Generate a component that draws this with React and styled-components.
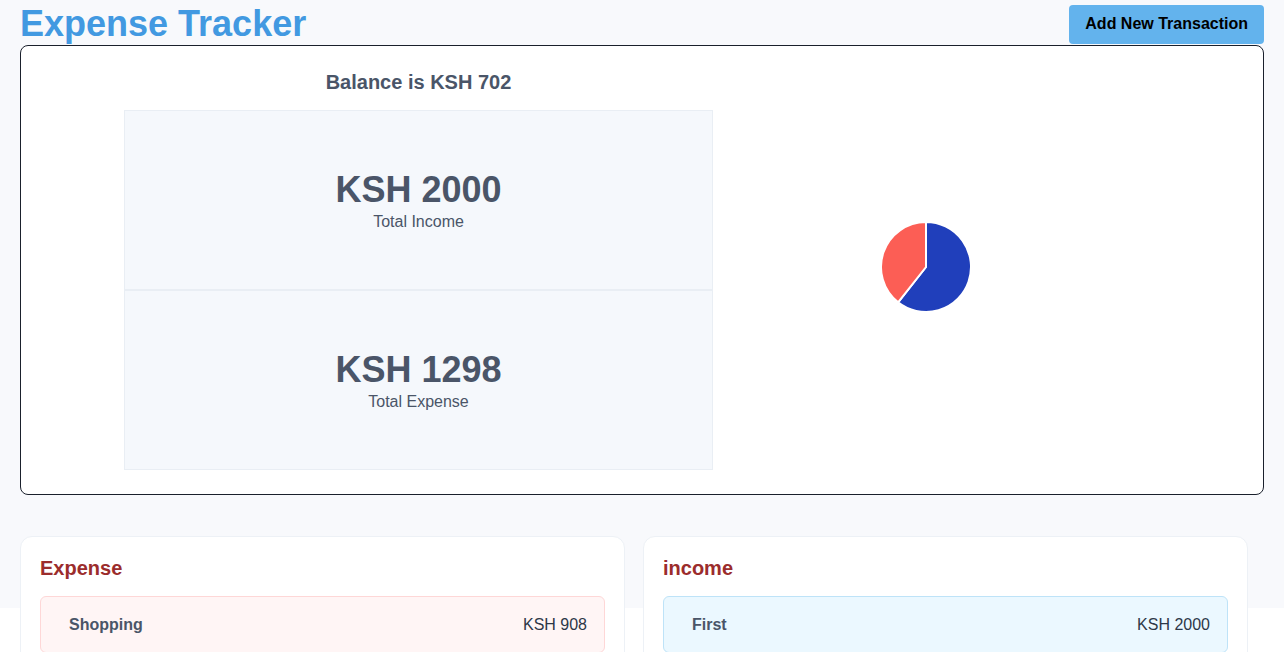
import styled, { createGlobalStyle } from "styled-components";

const GlobalStyle = createGlobalStyle`
  body {
    margin: 0;
    background: #ffffff;
    font-family: "Liberation Sans", Arial, sans-serif;
  }
  * {
    box-sizing: border-box;
  }
`;

// grey band stops at 608px, the lists run past it onto white
const Page = styled.div`
  background: linear-gradient(#f8f9fc 608px, #ffffff 608px);
  padding: 0 20px 40px;
`;

const Header = styled.header`
  display: flex;
  justify-content: space-between;
  align-items: center;
  padding: 4px 0 1px;
`;

const Title = styled.h1`
  margin: 0;
  font-size: 36px;
  line-height: 40px;
  font-weight: 700;
  color: #4299e1;
`;

const AddButton = styled.button`
  border: none;
  border-radius: 4px;
  background: #63b3ed;
  color: #000;
  font-family: inherit;
  font-size: 16px;
  font-weight: 700;
  line-height: 22px;
  padding: 8px 16px 9px;
  cursor: pointer;
`;

const SummaryCard = styled.section`
  display: grid;
  grid-template-columns: 747px 268px;
  align-items: center;
  background: #fff;
  border: 1px solid #1a202c;
  border-radius: 8px;
  padding: 24px;
`;

const BalancePanel = styled.div`
  display: flex;
  flex-direction: column;
  align-items: center;
`;

const Balance = styled.h2`
  margin: 0 0 16px;
  font-size: 20px;
  line-height: 24px;
  font-weight: 700;
  color: #4a5568;
`;

const StatBox = styled.div`
  width: 589px;
  height: 180px;
  display: flex;
  flex-direction: column;
  align-items: center;
  justify-content: center;
  padding-top: 4px;
  background: #f5f8fc;
  border: 1px solid #e9eef4;
`;

const Amount = styled.div`
  font-size: 36px;
  line-height: 40px;
  font-weight: 700;
  color: #4a5568;
`;

const Label = styled.div`
  font-size: 16px;
  line-height: 24px;
  color: #4a5568;
`;

const ChartWrap = styled.div`
  display: flex;
  justify-content: center;
  padding-bottom: 6px;
`;

const Lists = styled.div`
  display: grid;
  grid-template-columns: 605px 605px;
  gap: 18px;
  margin-top: 41px;
`;

const ListCard = styled.div`
  background: #fff;
  border: 1px solid #edf1f6;
  border-radius: 12px;
  padding: 19px 19px 20px;
`;

const ListTitle = styled.h3`
  margin: 0 0 16px;
  font-size: 20px;
  line-height: 24px;
  font-weight: 700;
  color: #9b2c2c;
`;

const Item = styled.div`
  display: flex;
  justify-content: space-between;
  align-items: center;
  padding: 16px 17px 15px 28px;
  border-radius: 6px;
  border: 1px solid ${(p) => (p.$type === "income" ? "#bee3f8" : "#fed7d7")};
  background: ${(p) => (p.$type === "income" ? "#ebf8ff" : "#fff5f5")};
  font-size: 16px;
  line-height: 24px;
`;

const ItemName = styled.span`
  font-weight: 700;
  color: #4a5568;
`;

const ItemAmount = styled.span`
  color: #2d3748;
`;

const Pie = ({ income, expense }) => {
  const r = 45;
  const c = 47;
  const angle = (income / (income + expense)) * 2 * Math.PI;
  const ex = c + r * Math.sin(angle);
  const ey = c - r * Math.cos(angle);
  const big = angle > Math.PI ? 1 : 0;
  return (
    <svg width="94" height="94" viewBox="0 0 94 94">
      <path
        d={`M${c} ${c} L${c} ${c - r} A${r} ${r} 0 ${big} 1 ${ex} ${ey} Z`}
        fill="#203fbb"
        stroke="#fff"
        strokeWidth="2"
        strokeLinejoin="round"
      />
      <path
        d={`M${c} ${c} L${ex} ${ey} A${r} ${r} 0 ${1 - big} 1 ${c} ${c - r} Z`}
        fill="#fc5e55"
        stroke="#fff"
        strokeWidth="2"
        strokeLinejoin="round"
      />
    </svg>
  );
};

const App = () => {
  const income = 2000;
  const expense = 1298;

  return (
    <>
      <GlobalStyle />
      <Page>
        <Header>
          <Title>Expense Tracker</Title>
          <AddButton>Add New Transaction</AddButton>
        </Header>
        <SummaryCard>
          <BalancePanel>
            <Balance>Balance is KSH {income - expense}</Balance>
            <StatBox>
              <Amount>KSH {income}</Amount>
              <Label>Total Income</Label>
            </StatBox>
            <StatBox>
              <Amount>KSH {expense}</Amount>
              <Label>Total Expense</Label>
            </StatBox>
          </BalancePanel>
          <ChartWrap>
            <Pie income={income} expense={expense} />
          </ChartWrap>
        </SummaryCard>
        <Lists>
          <ListCard>
            <ListTitle>Expense</ListTitle>
            <Item $type="expense">
              <ItemName>Shopping</ItemName>
              <ItemAmount>KSH 908</ItemAmount>
            </Item>
          </ListCard>
          <ListCard>
            <ListTitle>income</ListTitle>
            <Item $type="income">
              <ItemName>First</ItemName>
              <ItemAmount>KSH 2000</ItemAmount>
            </Item>
          </ListCard>
        </Lists>
      </Page>
    </>
  );
};

export default App;
